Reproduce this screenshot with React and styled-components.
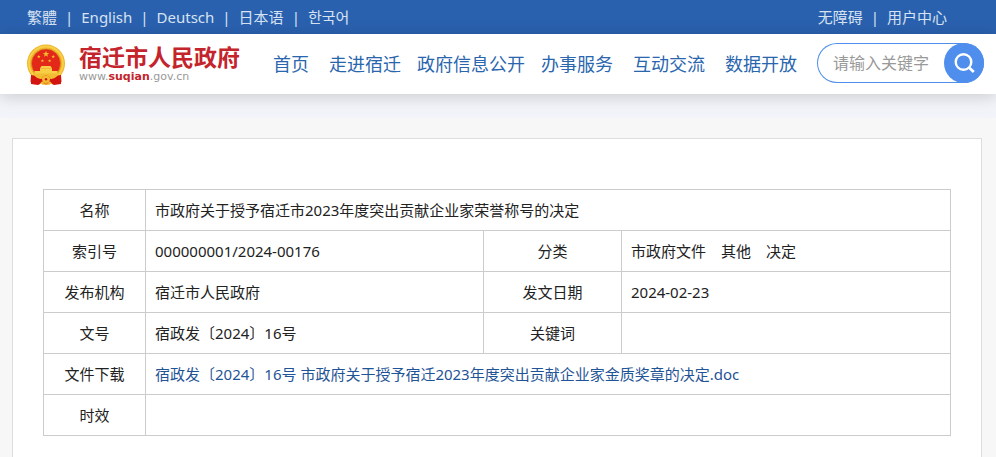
import React from "react";
import styled, { createGlobalStyle, css } from "styled-components";

const GlobalStyle = createGlobalStyle`
  * {
    box-sizing: border-box;
  }

  body {
    margin: 0;
    background: #f7f7f7;
    color: #222;
    font-family: "Noto Sans", "Noto Sans CJK SC", "Noto Sans CJK KR", sans-serif;
    font-size: 15px;
    line-height: 20px;
  }

  a {
    color: inherit;
    text-decoration: none;
  }
`;

const Page = styled.div`
  display: flex;
  flex-direction: column;
  min-height: 100vh;
`;

const TopBar = styled.div`
  display: flex;
  justify-content: space-between;
  padding: 7px 49px 7px 27px;
  background: #2a61af;
  color: #d8e3f2;
`;

const TopLinks = styled.div`
  display: flex;
  gap: 8px;
`;

const Header = styled.header`
  position: relative;
  display: flex;
  align-items: center;
  gap: 10px;
  height: 60px;
  padding: 0 12px 2px 26px;
  background: #fff;
  box-shadow: 0 2px 16px rgba(0, 0, 0, 0.18);
`;

const Band = styled.div`
  height: 24px;
  background: #f3f4f9;
`;

const Logo = styled.a`
  display: flex;
  flex: none;
  align-items: center;
  gap: 13px;
  padding-top: 4px;
`;

const LogoText = styled.span`
  display: flex;
  flex-direction: column;
`;

const LogoName = styled.strong`
  color: #c4242b;
  font-family: "Noto Sans CJK SC", sans-serif;
  font-size: 23px;
  line-height: 24px;
`;

const LogoUrl = styled.span`
  color: #999;
  font-family: "DejaVu Sans", sans-serif;
  font-size: 11px;
  line-height: 18px;

  b {
    color: #c4242b;
  }
`;

const Nav = styled.nav`
  display: flex;
  flex: 1;
  justify-content: flex-end;
  padding-top: 2px;
  color: #2a66ae;
  font-size: 18px;
  line-height: 26px;
  white-space: nowrap;
`;

const NavLink = styled.a`
  padding: 0 10px;

  ${props =>
    props.$tight &&
    css`
      padding: 0 6px;
    `}
`;

const Search = styled.form`
  display: flex;
  flex: none;
  width: 167px;
  height: 40px;
  border-radius: 20px;
  box-shadow: inset 0 0 0 1px #4f8eec;
`;

const SearchInput = styled.input`
  flex: 1;
  min-width: 0;
  padding: 0 0 0 16px;
  border: 0;
  outline: 0;
  background: transparent;
  font-family: inherit;
  font-size: 16px;

  &::placeholder {
    color: #999;
    opacity: 1;
  }
`;

const SearchButton = styled.button`
  display: flex;
  align-items: center;
  justify-content: center;
  width: 40px;
  height: 40px;
  padding: 0;
  border: 0;
  border-radius: 50%;
  background: #4f8eec;
`;

const Card = styled.main`
  flex: 1;
  margin: 20px 14px 0 12px;
  padding: 50px 30px 21px;
  border: 1px solid #ddd;
  border-bottom: 0;
  background: #fff;
`;

const InfoTable = styled.table`
  width: 100%;
  border-collapse: collapse;
  table-layout: fixed;
`;

const Col = styled.col`
  width: ${props => props.$width};
`;

const cell = css`
  height: 41px;
  border: 1px solid #ccc;
  font-weight: normal;
`;

const Label = styled.th`
  ${cell}
  padding: 0;
  text-align: center;
`;

const Value = styled.td`
  ${cell}
  padding: 0 9px;
  text-align: left;
`;

const Tags = styled.span`
  display: flex;
  gap: 15px;
`;

const FileLink = styled.a`
  color: #1f5496;
`;

const languages = [
  { text: "繁體", lang: "zh-Hant" },
  { text: "English", lang: "en" },
  { text: "Deutsch", lang: "de" },
  { text: "日本语", lang: "zh-CN" },
  { text: "한국어", lang: "ko" }
];

const userLinks = [{ text: "无障碍" }, { text: "用户中心" }];

const navItems = ["首页", "走进宿迁", "政府信息公开", "办事服务", "互动交流", "数据开放"];

function LinkList({ links }) {
  return (
    <TopLinks>
      {links.map((link, i) => (
        <React.Fragment key={link.text}>
          {i > 0 && <span>|</span>}
          <a href="#" lang={link.lang}>
            {link.text}
          </a>
        </React.Fragment>
      ))}
    </TopLinks>
  );
}

const starPath =
  "M0 -3 L0.8 -0.9 L3 -0.9 L1.2 0.5 L1.8 2.6 L0 1.3 L-1.8 2.6 L-1.2 0.5 L-3 -0.9 L-0.8 -0.9 Z";

function Emblem() {
  return (
    <svg width="40" height="42" viewBox="0 0 40 42" aria-hidden="true">
      <path d="M5 29 L5 40 L12 41 L16 39 L20 41 L24 39 L28 41 L35 40 L35 29 Z" fill="#d3150f" />
      <circle cx="20" cy="19.5" r="19" fill="#efb52a" />
      <circle cx="20" cy="19.5" r="17" fill="none" stroke="#f8d04a" strokeWidth="1.8" />
      <circle cx="20" cy="19.5" r="14.6" fill="#e3281a" stroke="#d09a20" strokeWidth="0.6" />
      <g fill="#f3b92c">
        <path d={starPath} transform="translate(20 10) scale(1.1)" />
        <path d={starPath} transform="translate(12.8 12.6) scale(0.6)" />
        <path d={starPath} transform="translate(27.2 12.6) scale(0.6)" />
        <path d={starPath} transform="translate(16.4 16.8) scale(0.6)" />
        <path d={starPath} transform="translate(23.6 16.8) scale(0.6)" />
      </g>
      <g fill="#f6cf45">
        <path d="M15.5 22 H24.5 L26 24.2 H14 Z" />
        <path d="M14 24.2 H26 V27 H14 Z" />
        <path d="M8.5 27 H31.5 V30 H8.5 Z" />
      </g>
      <path d="M5 31 Q10 31 14 34 L20 37 L26 34 Q30 31 35 31 L35.5 38 L28 40 L20 38 L12 40 L4.5 38 Z" fill="#d3150f" />
      <path d="M7 29.5 Q10 34.5 15 35 Q17 31.5 20 31.5 Q23 31.5 25 35 Q30 34.5 33 29.5 Z" fill="#f2bd33" />
      <circle cx="20" cy="35.2" r="3.8" fill="#f2bd33" />
      <circle cx="20" cy="35.2" r="1.2" fill="#d3150f" />
      <path
        d="M14.5 40 Q15.5 38 18 38 M25.5 40 Q24.5 38 22 38 M16 40 H24"
        fill="none"
        stroke="#f2bd33"
        strokeWidth="1.4"
      />
    </svg>
  );
}

function SearchIcon() {
  return (
    <svg width="22" height="22" viewBox="0 0 22 22" fill="none" stroke="#fff" aria-hidden="true">
      <circle cx="10.5" cy="10" r="7.8" strokeWidth="2.4" />
      <path d="M16 15.5 L20.8 20" strokeWidth="2.8" />
    </svg>
  );
}

export default function App() {
  return (
    <Page>
      <GlobalStyle />
      <TopBar>
        <LinkList links={languages} />
        <LinkList links={userLinks} />
      </TopBar>
      <Header>
        <Logo href="#">
          <Emblem />
          <LogoText>
            <LogoName>宿迁市人民政府</LogoName>
            <LogoUrl>
              www.<b>suqian</b>.gov.cn
            </LogoUrl>
          </LogoText>
        </Logo>
        <Nav>
          {navItems.map(item => (
            <NavLink key={item} href="#" $tight={item.length > 4}>
              {item}
            </NavLink>
          ))}
        </Nav>
        <Search onSubmit={e => e.preventDefault()}>
          <SearchInput type="text" placeholder="请输入关键字" aria-label="请输入关键字" />
          <SearchButton type="submit" aria-label="搜索">
            <SearchIcon />
          </SearchButton>
        </Search>
      </Header>
      <Band />
      <Card>
        <InfoTable>
          <colgroup>
            <Col $width="102px" />
            <Col $width="auto" />
            <Col $width="138px" />
            <Col $width="329px" />
          </colgroup>
          <tbody>
            <tr>
              <Label scope="row">名称</Label>
              <Value colSpan={3}>市政府关于授予宿迁市2023年度突出贡献企业家荣誉称号的决定</Value>
            </tr>
            <tr>
              <Label scope="row">索引号</Label>
              <Value>000000001/2024-00176</Value>
              <Label scope="row">分类</Label>
              <Value>
                <Tags>
                  <span>市政府文件</span>
                  <span>其他</span>
                  <span>决定</span>
                </Tags>
              </Value>
            </tr>
            <tr>
              <Label scope="row">发布机构</Label>
              <Value>宿迁市人民政府</Value>
              <Label scope="row">发文日期</Label>
              <Value>2024-02-23</Value>
            </tr>
            <tr>
              <Label scope="row">文号</Label>
              <Value>宿政发〔2024〕16号</Value>
              <Label scope="row">关键词</Label>
              <Value />
            </tr>
            <tr>
              <Label scope="row">文件下载</Label>
              <Value colSpan={3}>
                <FileLink href="#">
                  宿政发〔2024〕16号 市政府关于授予宿迁2023年度突出贡献企业家金质奖章的决定.doc
                </FileLink>
              </Value>
            </tr>
            <tr>
              <Label scope="row">时效</Label>
              <Value colSpan={3} />
            </tr>
          </tbody>
        </InfoTable>
      </Card>
    </Page>
  );
}
